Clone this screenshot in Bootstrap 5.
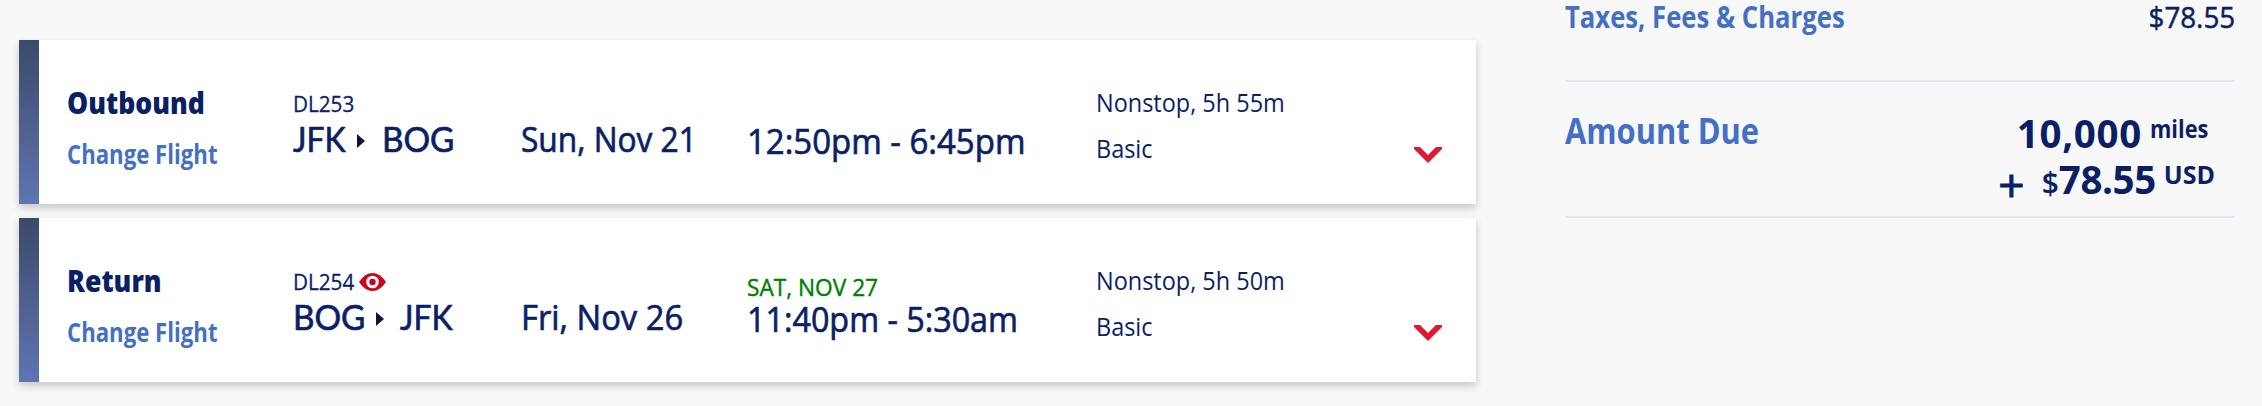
<!DOCTYPE html>
<html lang="en">
<head>
<meta charset="utf-8">
<title>Trip summary</title>
<link href="https://cdn.jsdelivr.net/npm/bootstrap@5.3.0/dist/css/bootstrap.min.css" rel="stylesheet">
<style>
body{min-height:406px;background:#f8f8f8;color:#0b1f66;font-family:"Open Sans","Noto Sans",sans-serif}
.flights{width:1457px;margin-left:19px;padding-top:40px;gap:14px}
.flight{height:164px;box-shadow:0 4px 8px rgba(0,0,0,.2)}
.bar{width:20px;background:linear-gradient(#3b4a68,#5f75b1)}
/* slightly condensed text, squeezed toward its starting edge */
.sq{display:inline-block;transform-origin:0 50%;transform:scaleX(var(--k));white-space:nowrap}
.c-dir{width:254px;padding:43px 0 0 28px}
.c-route{width:228px;padding-top:48px}
.c-date{width:226px;padding-top:79px}
.c-time{width:349px;padding-top:58px}
.c-info{padding-top:39px}
.dir{font-size:29.5px;line-height:40px;font-weight:800;--k:.9}
.change{font-size:26px;line-height:40px;font-weight:700;--k:.853;color:#4370c4;text-decoration:none;margin-top:11px}
.num{font-size:22px;line-height:30px;height:30px}
.num .sq{width:62px;--k:.94;-webkit-text-stroke:.3px}
.big{font-size:35px;line-height:40px;-webkit-text-stroke:.7px}
.city{font-family:Lato,"Open Sans",sans-serif}
.city .jfk{width:54px;--k:.91}
.city .bog{width:72px;--k:.95}
.arr{margin:16px 17px 0 10px}
.bog + .arr{margin:16px 16px 0 11px}
.c-date .big{--k:.905}
.c-date .fri{--k:.935}
.c-time .big{--k:.942;margin-top:1px}
.c-time .late{--k:.923}
.nextday{height:22px;font-size:23.5px;line-height:22px;-webkit-text-stroke:.4px;--k:.965;color:#008000}
.info{font-size:25.5px;line-height:46px;--k:.92}
.chev{margin:107px 34px 0 auto}
.eye{margin-top:7px;margin-left:4px}
.totals{width:670px;margin-left:89px}
.line{border-bottom:2px solid #e3e8f5}
.taxes{height:82px;font-size:29.5px;line-height:34px}
.taxes .lbl{font-weight:700;--k:.87;color:#4370c4}
.taxes .amt{--k:.94;transform-origin:100% 50%;-webkit-text-stroke:.5px}
.due{height:136px;padding-top:29px}
.due .lbl{font-size:36px;line-height:40px;font-weight:700;--k:.857;color:#4370c4}
.amounts{margin-top:-1px}
.sum{font-size:38.5px;line-height:46px;font-weight:700;height:46px;padding-right:20px}
.sum.points{padding-right:18px}
.miles{letter-spacing:.7px}
.cash{letter-spacing:-.4px}
.unit{font-size:25px;line-height:1;height:25px;vertical-align:10px;margin-left:8px;--k:1}
.unit.mi{--k:.87}
.plus{font-size:46px;line-height:0;font-weight:400;-webkit-text-stroke:1px;vertical-align:-8px;margin-right:17px}
.dollar{font-size:30px;line-height:0;font-weight:600}
</style>
</head>
<body>
<div class="d-flex align-items-start">
  <main class="flights d-flex flex-column">
    <section class="flight d-flex bg-white">
      <div class="bar"></div>
      <div class="c-dir d-flex flex-column align-items-start"><span class="dir sq">Outbound</span><a class="change sq" href="#">Change Flight</a></div>
      <div class="c-route">
        <div class="num d-flex"><span class="sq">DL253</span></div>
        <div class="big city d-flex"><span class="sq jfk">JFK</span><svg class="arr" width="8" height="14"><path d="M0 0 8 7 0 14Z" fill="#06163f"/></svg><span class="sq bog ms-n1">BOG</span></div>
      </div>
      <div class="c-date"><span class="big sq">Sun, Nov 21</span></div>
      <div class="c-time"><div class="nextday"></div><span class="big sq">12:50pm - 6:45pm</span></div>
      <div class="c-info d-flex flex-column align-items-start"><span class="info sq">Nonstop, 5h 55m</span><span class="info sq">Basic</span></div>
      <svg class="chev" width="28" height="16"><path d="M0 0H6L14 8 22 0H28V2L14 16 0 2Z" fill="#e01933"/></svg>
    </section>
    <section class="flight d-flex bg-white">
      <div class="bar"></div>
      <div class="c-dir d-flex flex-column align-items-start"><span class="dir sq">Return</span><a class="change sq" href="#">Change Flight</a></div>
      <div class="c-route">
        <div class="num d-flex"><span class="sq">DL254</span><svg class="eye" width="27" height="18" viewBox="0 0 27 18"><path d="M0 9Q6 0 13.500 0T27 9Q21 18 13.500 18T0 9Z" fill="#d0021b"/><circle cx="13.500" cy="9" r="6.300" fill="#fff"/><circle cx="13.500" cy="9" r="3.200" fill="#d0021b"/></svg></div>
        <div class="big city d-flex"><span class="sq bog">BOG</span><svg class="arr" width="8" height="14"><path d="M0 0 8 7 0 14Z" fill="#06163f"/></svg><span class="sq jfk">JFK</span></div>
      </div>
      <div class="c-date"><span class="big sq fri">Fri, Nov 26</span></div>
      <div class="c-time"><div class="nextday"><span class="sq">SAT, NOV 27</span></div><span class="big sq late">11:40pm - 5:30am</span></div>
      <div class="c-info d-flex flex-column align-items-start"><span class="info sq">Nonstop, 5h 50m</span><span class="info sq">Basic</span></div>
      <svg class="chev" width="28" height="16"><path d="M0 0H6L14 8 22 0H28V2L14 16 0 2Z" fill="#e01933"/></svg>
    </section>
  </main>
  <aside class="totals">
    <div class="taxes line d-flex justify-content-between"><span class="lbl sq">Taxes, Fees &amp; Charges</span><span class="amt sq">$78.55</span></div>
    <div class="due line d-flex justify-content-between">
      <span class="lbl sq">Amount Due</span>
      <div class="amounts text-end">
        <div class="sum points"><span class="miles">10,000</span><span class="unit mi sq">miles</span></div>
        <div class="sum"><span class="plus">+</span><span class="dollar">$</span><span class="cash">78.55</span><span class="unit sq">USD</span></div>
      </div>
    </div>
  </aside>
</div>
<script src="https://cdn.jsdelivr.net/npm/bootstrap@5.3.0/dist/js/bootstrap.bundle.min.js"></script>
</body>
</html>
